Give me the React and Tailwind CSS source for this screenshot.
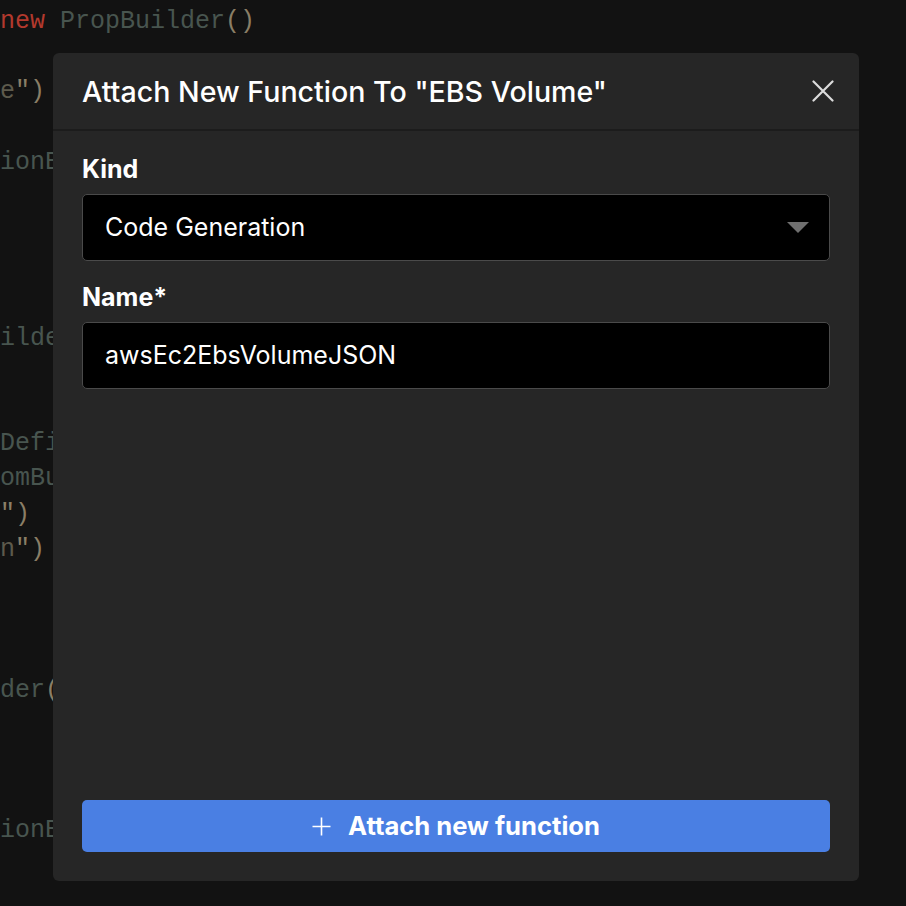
import React from "react";

const codeLines = [
  [["new", "text-[#b3392d]"], [" PropBuilder", "text-[#48554f]"], ["()", "text-[#8a7e66]"]],
  [],
  [["e", "text-[#5d5a4c]"], ["\")", "text-[#8a7e66]"]],
  [],
  [["ionB", "text-[#48554f]"]],
  [],
  [],
  [],
  [],
  [["ilde", "text-[#48554f]"]],
  [],
  [],
  [["Defi", "text-[#48554f]"]],
  [["omBu", "text-[#48554f]"]],
  [["\")", "text-[#8a7e66]"]],
  [["n", "text-[#5d5a4c]"], ["\")", "text-[#8a7e66]"]],
  [],
  [],
  [],
  [["der", "text-[#48554f]"], ["(", "text-[#8a7e66]"]],
  [],
  [],
  [],
  [["ionB", "text-[#48554f]"]],
  [],
];

function Field({ label, children }) {
  return (
    <div className="flex flex-col">
      <label className="text-[25px] leading-[28px] font-bold text-white mb-[11px]">{label}</label>
      {children}
    </div>
  );
}

export default function App() {
  return (
    <div className="relative w-[906px] h-[906px] overflow-hidden bg-[#121212] font-['Inter','Noto_Sans',sans-serif]">
      {/* editor behind the dialog */}
      <pre className="pt-[4px] font-['Liberation_Mono',monospace] text-[25px] leading-[35.2px] whitespace-pre">
        {codeLines.map((line, i) => (
          <div key={i} className="h-[35.2px]">
            {line.map(([t, c], j) => (
              <span key={j} className={c}>
                {t}
              </span>
            ))}
          </div>
        ))}
      </pre>

      {/* dialog */}
      <div className="absolute left-[53px] top-[53px] w-[806px] h-[828px] bg-[#262626] rounded-md flex flex-col">
        <div className="h-[78px] flex items-center justify-between pl-[29px] pr-[25px] border-b-2 border-[#1c1c1c]">
          <h2 className="text-[28.6px] font-medium text-white pt-[2px]">Attach New Function To "EBS Volume"</h2>
          <button className="w-[22px] h-[22px] text-[#dcdcdc]">
            <svg viewBox="0 0 22 22" width="22" height="22" fill="none" stroke="currentColor" strokeWidth="2.2" strokeLinecap="round">
              <path d="M1.5 1.5 20.5 20.5M20.5 1.5 1.5 20.5" />
            </svg>
          </button>
        </div>

        <div className="flex-1 flex flex-col px-[29px] pt-[24px] pb-[29px]">
          <Field label="Kind">
            <div className="h-[67px] bg-black border border-[#4a4a4a] rounded-[5px] flex items-center justify-between pl-[22px] pr-[20px]">
              <span className="text-[25px] text-white">Code Generation</span>
              <svg width="22" height="11" viewBox="0 0 22 11">
                <path d="M0 0h22L11 11z" fill="#6f6f6f" />
              </svg>
            </div>
          </Field>
          <div className="h-[22px]" />
          <Field label="Name*">
            <div className="h-[67px] bg-black border border-[#4a4a4a] rounded-[5px] flex items-center pl-[22px]">
              <span className="text-[25px] text-white">awsEc2EbsVolumeJSON</span>
            </div>
          </Field>

          <button className="mt-auto h-[52px] w-full bg-[#4a7fe3] rounded-[5px] flex items-center justify-center gap-[17px] text-white">
            <svg width="19" height="19" viewBox="0 0 19 19" stroke="currentColor" strokeWidth="1.6">
              <path d="M9.5 0.5v18M0.5 9.5h18" />
            </svg>
            <span className="text-[25.6px] font-bold">Attach new function</span>
          </button>
        </div>
      </div>
    </div>
  );
}
